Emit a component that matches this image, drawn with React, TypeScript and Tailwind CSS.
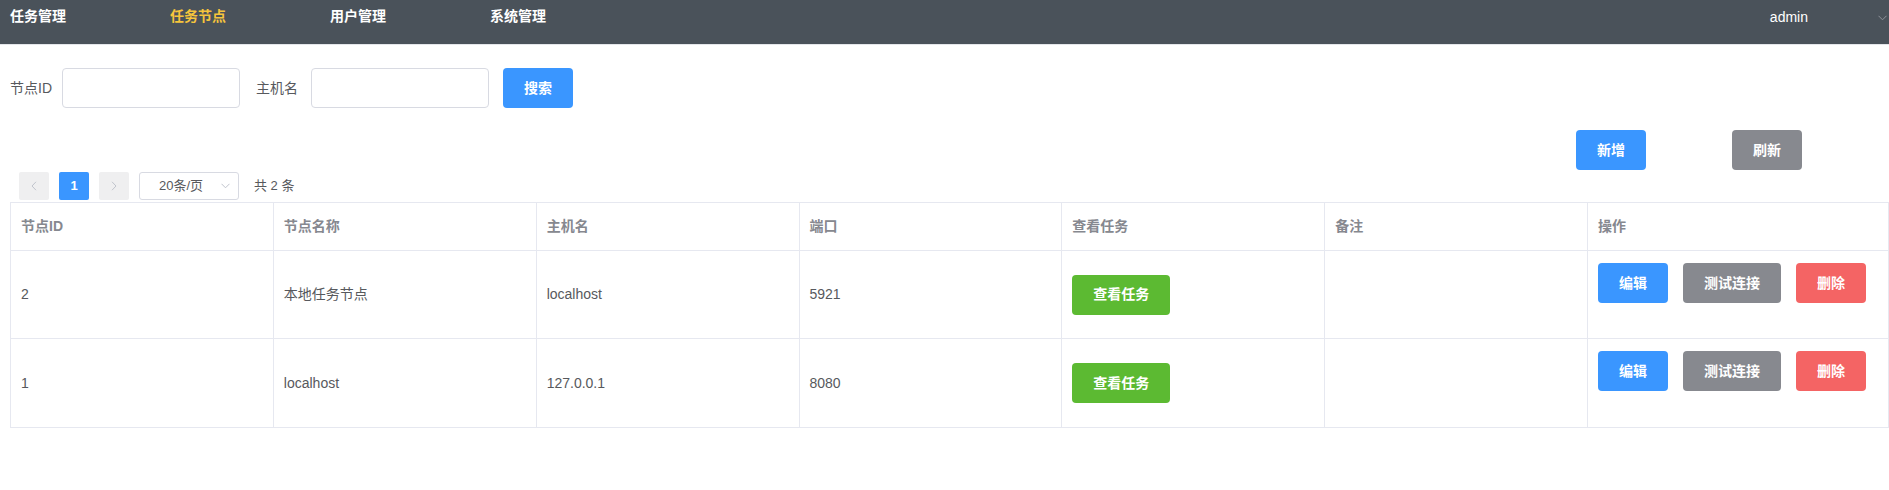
import React from "react";

const FONT = { fontFamily: '"Liberation Sans", "Noto Sans CJK SC", sans-serif' };

function Btn({ children, color, w }: { children: React.ReactNode; color: string; w: string }) {
  return (
    <button className={`${color} ${w} h-[40px] rounded-[4px] text-white text-[14px] font-semibold flex items-center justify-center shrink-0`}>
      {children}
    </button>
  );
}

const rows = [
  { id: "2", name: "本地任务节点", host: "localhost", port: "5921" },
  { id: "1", name: "localhost", host: "127.0.0.1", port: "8080" },
];

const headers = ["节点ID", "节点名称", "主机名", "端口", "查看任务", "备注", "操作"];

export default function App() {
  return (
    <div className="w-[1889px] h-[490px] bg-white overflow-hidden" style={FONT}>
      {/* Top nav */}
      <div className="h-[45px] bg-[#4a525a] border-b border-[#e4e6ea] flex items-start">
        <div className="flex pt-[8px]">
          {["任务管理", "任务节点", "用户管理", "系统管理"].map((t, i) => (
            <div
              key={t}
              className={`w-[160px] pl-[10px] text-[14px] font-bold leading-[17px] ${i === 1 ? "text-[#f6c53c]" : "text-white"}`}
            >
              {t}
            </div>
          ))}
        </div>
        <div className="ml-auto flex items-center pt-[7px]">
          <span className="text-white text-[14px] font-medium">admin</span>
          <svg className="ml-[70px] mr-[2px]" width="9" height="6" viewBox="0 0 9 6">
            <path d="M0.5 0.8 L4.5 4.8 L8.5 0.8" fill="none" stroke="#8f939a" strokeWidth="1" />
          </svg>
        </div>
      </div>

      {/* Search form */}
      <div className="mt-[23px] flex items-center h-[40px] pl-[10px] text-[14px] text-[#57595d]">
        <span className="w-[52px]">节点ID</span>
        <div className="w-[178px] h-[40px] border border-[#d8dae2] rounded-[4px]" />
        <span className="ml-[16px] w-[55px]">主机名</span>
        <div className="w-[178px] h-[40px] border border-[#d8dae2] rounded-[4px]" />
        <div className="ml-[14px]">
          <Btn color="bg-[#3a96ff]" w="w-[70px]">搜索</Btn>
        </div>
      </div>

      {/* Add / refresh */}
      <div className="mt-[22px] flex justify-end pr-[87px] gap-[86px]">
        <Btn color="bg-[#3a96ff]" w="w-[70px]">新增</Btn>
        <Btn color="bg-[#87898f]" w="w-[70px]">刷新</Btn>
      </div>

      {/* Pagination */}
      <div className="mt-[2px] flex items-center h-[28px] pl-[19px] text-[13px] text-[#57595d]">
        <div className="w-[30px] h-[28px] rounded-[2px] bg-[#efeff0] flex items-center justify-center">
          <svg width="6" height="10" viewBox="0 0 6 10">
            <path d="M5 0.8 L1 5 L5 9.2" fill="none" stroke="#c0c4cc" strokeWidth="1" />
          </svg>
        </div>
        <div className="ml-[10px] w-[30px] h-[28px] rounded-[2px] bg-[#3a96ff] text-white font-bold flex items-center justify-center">
          1
        </div>
        <div className="ml-[10px] w-[30px] h-[28px] rounded-[2px] bg-[#efeff0] flex items-center justify-center">
          <svg width="6" height="10" viewBox="0 0 6 10">
            <path d="M1 0.8 L5 5 L1 9.2" fill="none" stroke="#c0c4cc" strokeWidth="1" />
          </svg>
        </div>
        <div className="ml-[10px] w-[100px] h-[28px] rounded-[3px] border border-[#d8dae2] flex items-center pl-[19px] pr-[8px]">
          <span>20条/页</span>
          <svg className="ml-auto" width="9" height="6" viewBox="0 0 9 6">
            <path d="M0.5 0.8 L4.5 4.8 L8.5 0.8" fill="none" stroke="#c0c4cc" strokeWidth="1" />
          </svg>
        </div>
        <span className="ml-[15px]">共 2 条</span>
      </div>

      {/* Table */}
      <div className="mt-[2px] ml-[10px] w-[1879px] border border-[#e6e8f0] text-[14px]">
        <div className="grid grid-cols-[repeat(6,1fr)_300px] h-[48px] border-b border-[#e6e8f0]">
          {headers.map((h, i) => (
            <div
              key={h}
              className={`flex items-center px-[10px] text-[#86888f] font-semibold ${i < 6 ? "border-r border-[#e6e8f0]" : ""}`}
            >
              {h}
            </div>
          ))}
        </div>
        {rows.map((r, ri) => (
          <div
            key={r.id}
            className={`grid grid-cols-[repeat(6,1fr)_300px] h-[88px] ${ri === 0 ? "border-b border-[#e6e8f0]" : ""}`}
          >
            {[r.id, r.name, r.host, r.port].map((v, i) => (
              <div key={i} className="flex items-center px-[10px] text-[#57595d] border-r border-[#e6e8f0]">
                {v}
              </div>
            ))}
            <div className="flex items-center px-[10px] border-r border-[#e6e8f0]">
              <Btn color="bg-[#5cba32]" w="w-[98px]">查看任务</Btn>
            </div>
            <div className="border-r border-[#e6e8f0]" />
            <div className="flex items-start pt-[12px] px-[10px] gap-[15px]">
              <Btn color="bg-[#3a96ff]" w="w-[70px]">编辑</Btn>
              <Btn color="bg-[#87898f]" w="w-[98px]">测试连接</Btn>
              <Btn color="bg-[#f46464]" w="w-[70px]">删除</Btn>
            </div>
          </div>
        ))}
      </div>
    </div>
  );
}
